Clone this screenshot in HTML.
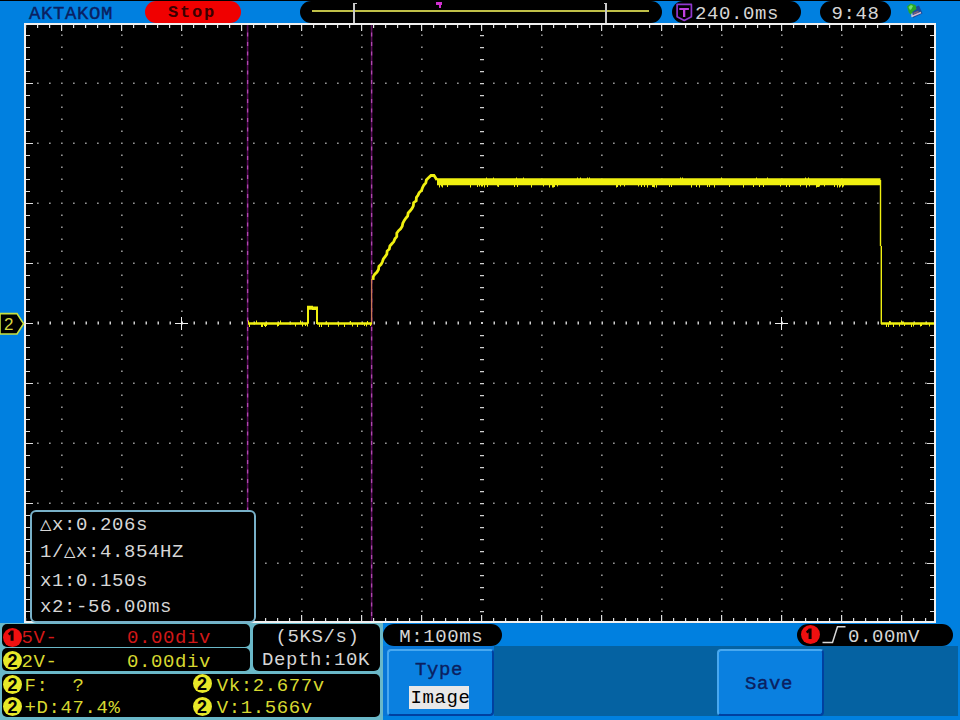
<!DOCTYPE html>
<html><head><meta charset="utf-8"><style>
*{margin:0;padding:0;box-sizing:border-box}
html,body{width:960px;height:720px;overflow:hidden;background:#0080e0;font-family:"Liberation Mono",monospace}
.a{position:absolute;white-space:pre;line-height:1}
.pill{position:absolute;background:#000;border-radius:11px}
.t{position:absolute;white-space:pre;line-height:1;font-size:19px;letter-spacing:0.6px}
.circ{position:absolute;width:19px;height:19px;border-radius:50%;font-family:"Liberation Sans",sans-serif;font-weight:bold;font-size:18px;line-height:20px;text-align:center;color:#000}
</style></head><body>
<div class="a" style="left:0;top:0;width:960px;height:1px;background:#000"></div>
<div class="t" style="left:29px;top:4.7px;color:#0a2060;-webkit-text-stroke:0.4px #0a2060">AKTAKOM</div>
<div class="pill" style="left:145px;top:1px;width:96px;height:22px;background:#f00000"></div>
<div class="t" style="left:168px;top:4.3px;color:#3a0000;font-size:17px;letter-spacing:1.8px;font-weight:bold">Stop</div>
<div class="pill" style="left:300px;top:1px;width:362px;height:22px"></div>
<div class="a" style="left:312px;top:10px;width:337px;height:2px;background:#c0c048"></div>
<div class="a" style="left:353px;top:2.5px;width:2px;height:20.5px;background:#c8c8c8"></div><div class="a" style="left:353px;top:2.5px;width:3.5px;height:1.5px;background:#c8c8c8"></div>
<div class="a" style="left:605px;top:2.5px;width:2px;height:20.5px;background:#c8c8c8"></div><div class="a" style="left:603.5px;top:2.5px;width:3.5px;height:1.5px;background:#c8c8c8"></div>
<div class="a" style="left:436.3px;top:2.3px;width:6.2px;height:2.4px;background:#d030d0"></div>
<div class="a" style="left:438.8px;top:2.3px;width:2.2px;height:5.5px;background:#d030d0"></div>
<div class="pill" style="left:672px;top:1px;width:129px;height:22px"></div>
<svg class="a" style="left:0;top:0" width="700" height="24"><path d="M677.1 4.4h14.3v12.4l-7.15 3.6l-7.15-3.6z" fill="none" stroke="#9038cc" stroke-width="1.7" stroke-linejoin="round"/><path d="M679.3 8h9.6v2h-9.6zM683 8h2.3v9h-2.3z" fill="#c040e0"/></svg>
<div class="t" style="left:695px;top:4.7px;color:#d6d6d6">240.0ms</div>
<div class="pill" style="left:820px;top:1px;width:71px;height:22px"></div>
<div class="t" style="left:831.5px;top:4.5px;color:#d6d6d6">9:48</div>
<svg class="a" style="left:0;top:0" width="960" height="720" viewBox="0 0 960 720">
<path d="M910 9l9-3.5 3.5 8-9.5 4.5z" fill="#1a4a9a"/>
<path d="M911.5 16.5l9.5-4" stroke="#d8b8c8" stroke-width="1.6" fill="none"/>
<path d="M911 11l1.5 6" stroke="#b0c8e0" stroke-width="1.4" fill="none"/>
<path d="M913.5 13.5l5-2" stroke="#806070" stroke-width="1.4" fill="none"/>
<path d="M907 6.5l3.5-3 5 1.5 1 4-3.5 2.5-2 3-2-1.5z" fill="#28a828"/>
<path d="M908.5 7l2.5-2 2 1-1.5 3-1.5 1z" fill="#70e070"/>
<rect x="24" y="23" width="912" height="600" fill="#f0f0f0"/>
<rect x="26" y="25" width="908" height="596" fill="#000"/>
<path d="M61 34.4h1.7v1.6h-1.7zM61 46.4h1.7v1.6h-1.7zM61 58.4h1.7v1.6h-1.7zM61 70.4h1.7v1.6h-1.7zM61 82.4h1.7v1.6h-1.7zM61 94.4h1.7v1.6h-1.7zM61 106.4h1.7v1.6h-1.7zM61 118.4h1.7v1.6h-1.7zM61 130.4h1.7v1.6h-1.7zM61 142.4h1.7v1.6h-1.7zM61 154.4h1.7v1.6h-1.7zM61 166.4h1.7v1.6h-1.7zM61 178.4h1.7v1.6h-1.7zM61 190.4h1.7v1.6h-1.7zM61 202.4h1.7v1.6h-1.7zM61 214.4h1.7v1.6h-1.7zM61 226.4h1.7v1.6h-1.7zM61 238.4h1.7v1.6h-1.7zM61 250.4h1.7v1.6h-1.7zM61 262.4h1.7v1.6h-1.7zM61 274.4h1.7v1.6h-1.7zM61 286.4h1.7v1.6h-1.7zM61 298.4h1.7v1.6h-1.7zM61 310.4h1.7v1.6h-1.7zM61 334.4h1.7v1.6h-1.7zM61 346.4h1.7v1.6h-1.7zM61 358.4h1.7v1.6h-1.7zM61 370.4h1.7v1.6h-1.7zM61 382.4h1.7v1.6h-1.7zM61 394.4h1.7v1.6h-1.7zM61 406.4h1.7v1.6h-1.7zM61 418.4h1.7v1.6h-1.7zM61 430.4h1.7v1.6h-1.7zM61 442.4h1.7v1.6h-1.7zM61 454.4h1.7v1.6h-1.7zM61 466.4h1.7v1.6h-1.7zM61 478.4h1.7v1.6h-1.7zM61 490.4h1.7v1.6h-1.7zM61 502.4h1.7v1.6h-1.7zM61 514.4h1.7v1.6h-1.7zM61 526.4h1.7v1.6h-1.7zM61 538.4h1.7v1.6h-1.7zM61 550.4h1.7v1.6h-1.7zM61 562.4h1.7v1.6h-1.7zM61 574.4h1.7v1.6h-1.7zM61 586.4h1.7v1.6h-1.7zM61 598.4h1.7v1.6h-1.7zM61 610.4h1.7v1.6h-1.7zM121 34.4h1.7v1.6h-1.7zM121 46.4h1.7v1.6h-1.7zM121 58.4h1.7v1.6h-1.7zM121 70.4h1.7v1.6h-1.7zM121 82.4h1.7v1.6h-1.7zM121 94.4h1.7v1.6h-1.7zM121 106.4h1.7v1.6h-1.7zM121 118.4h1.7v1.6h-1.7zM121 130.4h1.7v1.6h-1.7zM121 142.4h1.7v1.6h-1.7zM121 154.4h1.7v1.6h-1.7zM121 166.4h1.7v1.6h-1.7zM121 178.4h1.7v1.6h-1.7zM121 190.4h1.7v1.6h-1.7zM121 202.4h1.7v1.6h-1.7zM121 214.4h1.7v1.6h-1.7zM121 226.4h1.7v1.6h-1.7zM121 238.4h1.7v1.6h-1.7zM121 250.4h1.7v1.6h-1.7zM121 262.4h1.7v1.6h-1.7zM121 274.4h1.7v1.6h-1.7zM121 286.4h1.7v1.6h-1.7zM121 298.4h1.7v1.6h-1.7zM121 310.4h1.7v1.6h-1.7zM121 334.4h1.7v1.6h-1.7zM121 346.4h1.7v1.6h-1.7zM121 358.4h1.7v1.6h-1.7zM121 370.4h1.7v1.6h-1.7zM121 382.4h1.7v1.6h-1.7zM121 394.4h1.7v1.6h-1.7zM121 406.4h1.7v1.6h-1.7zM121 418.4h1.7v1.6h-1.7zM121 430.4h1.7v1.6h-1.7zM121 442.4h1.7v1.6h-1.7zM121 454.4h1.7v1.6h-1.7zM121 466.4h1.7v1.6h-1.7zM121 478.4h1.7v1.6h-1.7zM121 490.4h1.7v1.6h-1.7zM121 502.4h1.7v1.6h-1.7zM121 514.4h1.7v1.6h-1.7zM121 526.4h1.7v1.6h-1.7zM121 538.4h1.7v1.6h-1.7zM121 550.4h1.7v1.6h-1.7zM121 562.4h1.7v1.6h-1.7zM121 574.4h1.7v1.6h-1.7zM121 586.4h1.7v1.6h-1.7zM121 598.4h1.7v1.6h-1.7zM121 610.4h1.7v1.6h-1.7zM181 34.4h1.7v1.6h-1.7zM181 46.4h1.7v1.6h-1.7zM181 58.4h1.7v1.6h-1.7zM181 70.4h1.7v1.6h-1.7zM181 82.4h1.7v1.6h-1.7zM181 94.4h1.7v1.6h-1.7zM181 106.4h1.7v1.6h-1.7zM181 118.4h1.7v1.6h-1.7zM181 130.4h1.7v1.6h-1.7zM181 142.4h1.7v1.6h-1.7zM181 154.4h1.7v1.6h-1.7zM181 166.4h1.7v1.6h-1.7zM181 178.4h1.7v1.6h-1.7zM181 190.4h1.7v1.6h-1.7zM181 202.4h1.7v1.6h-1.7zM181 214.4h1.7v1.6h-1.7zM181 226.4h1.7v1.6h-1.7zM181 238.4h1.7v1.6h-1.7zM181 250.4h1.7v1.6h-1.7zM181 262.4h1.7v1.6h-1.7zM181 274.4h1.7v1.6h-1.7zM181 286.4h1.7v1.6h-1.7zM181 298.4h1.7v1.6h-1.7zM181 310.4h1.7v1.6h-1.7zM181 334.4h1.7v1.6h-1.7zM181 346.4h1.7v1.6h-1.7zM181 358.4h1.7v1.6h-1.7zM181 370.4h1.7v1.6h-1.7zM181 382.4h1.7v1.6h-1.7zM181 394.4h1.7v1.6h-1.7zM181 406.4h1.7v1.6h-1.7zM181 418.4h1.7v1.6h-1.7zM181 430.4h1.7v1.6h-1.7zM181 442.4h1.7v1.6h-1.7zM181 454.4h1.7v1.6h-1.7zM181 466.4h1.7v1.6h-1.7zM181 478.4h1.7v1.6h-1.7zM181 490.4h1.7v1.6h-1.7zM181 502.4h1.7v1.6h-1.7zM181 514.4h1.7v1.6h-1.7zM181 526.4h1.7v1.6h-1.7zM181 538.4h1.7v1.6h-1.7zM181 550.4h1.7v1.6h-1.7zM181 562.4h1.7v1.6h-1.7zM181 574.4h1.7v1.6h-1.7zM181 586.4h1.7v1.6h-1.7zM181 598.4h1.7v1.6h-1.7zM181 610.4h1.7v1.6h-1.7zM241 34.4h1.7v1.6h-1.7zM241 46.4h1.7v1.6h-1.7zM241 58.4h1.7v1.6h-1.7zM241 70.4h1.7v1.6h-1.7zM241 82.4h1.7v1.6h-1.7zM241 94.4h1.7v1.6h-1.7zM241 106.4h1.7v1.6h-1.7zM241 118.4h1.7v1.6h-1.7zM241 130.4h1.7v1.6h-1.7zM241 142.4h1.7v1.6h-1.7zM241 154.4h1.7v1.6h-1.7zM241 166.4h1.7v1.6h-1.7zM241 178.4h1.7v1.6h-1.7zM241 190.4h1.7v1.6h-1.7zM241 202.4h1.7v1.6h-1.7zM241 214.4h1.7v1.6h-1.7zM241 226.4h1.7v1.6h-1.7zM241 238.4h1.7v1.6h-1.7zM241 250.4h1.7v1.6h-1.7zM241 262.4h1.7v1.6h-1.7zM241 274.4h1.7v1.6h-1.7zM241 286.4h1.7v1.6h-1.7zM241 298.4h1.7v1.6h-1.7zM241 310.4h1.7v1.6h-1.7zM241 334.4h1.7v1.6h-1.7zM241 346.4h1.7v1.6h-1.7zM241 358.4h1.7v1.6h-1.7zM241 370.4h1.7v1.6h-1.7zM241 382.4h1.7v1.6h-1.7zM241 394.4h1.7v1.6h-1.7zM241 406.4h1.7v1.6h-1.7zM241 418.4h1.7v1.6h-1.7zM241 430.4h1.7v1.6h-1.7zM241 442.4h1.7v1.6h-1.7zM241 454.4h1.7v1.6h-1.7zM241 466.4h1.7v1.6h-1.7zM241 478.4h1.7v1.6h-1.7zM241 490.4h1.7v1.6h-1.7zM241 502.4h1.7v1.6h-1.7zM241 514.4h1.7v1.6h-1.7zM241 526.4h1.7v1.6h-1.7zM241 538.4h1.7v1.6h-1.7zM241 550.4h1.7v1.6h-1.7zM241 562.4h1.7v1.6h-1.7zM241 574.4h1.7v1.6h-1.7zM241 586.4h1.7v1.6h-1.7zM241 598.4h1.7v1.6h-1.7zM241 610.4h1.7v1.6h-1.7zM301 34.4h1.7v1.6h-1.7zM301 46.4h1.7v1.6h-1.7zM301 58.4h1.7v1.6h-1.7zM301 70.4h1.7v1.6h-1.7zM301 82.4h1.7v1.6h-1.7zM301 94.4h1.7v1.6h-1.7zM301 106.4h1.7v1.6h-1.7zM301 118.4h1.7v1.6h-1.7zM301 130.4h1.7v1.6h-1.7zM301 142.4h1.7v1.6h-1.7zM301 154.4h1.7v1.6h-1.7zM301 166.4h1.7v1.6h-1.7zM301 178.4h1.7v1.6h-1.7zM301 190.4h1.7v1.6h-1.7zM301 202.4h1.7v1.6h-1.7zM301 214.4h1.7v1.6h-1.7zM301 226.4h1.7v1.6h-1.7zM301 238.4h1.7v1.6h-1.7zM301 250.4h1.7v1.6h-1.7zM301 262.4h1.7v1.6h-1.7zM301 274.4h1.7v1.6h-1.7zM301 286.4h1.7v1.6h-1.7zM301 298.4h1.7v1.6h-1.7zM301 310.4h1.7v1.6h-1.7zM301 334.4h1.7v1.6h-1.7zM301 346.4h1.7v1.6h-1.7zM301 358.4h1.7v1.6h-1.7zM301 370.4h1.7v1.6h-1.7zM301 382.4h1.7v1.6h-1.7zM301 394.4h1.7v1.6h-1.7zM301 406.4h1.7v1.6h-1.7zM301 418.4h1.7v1.6h-1.7zM301 430.4h1.7v1.6h-1.7zM301 442.4h1.7v1.6h-1.7zM301 454.4h1.7v1.6h-1.7zM301 466.4h1.7v1.6h-1.7zM301 478.4h1.7v1.6h-1.7zM301 490.4h1.7v1.6h-1.7zM301 502.4h1.7v1.6h-1.7zM301 514.4h1.7v1.6h-1.7zM301 526.4h1.7v1.6h-1.7zM301 538.4h1.7v1.6h-1.7zM301 550.4h1.7v1.6h-1.7zM301 562.4h1.7v1.6h-1.7zM301 574.4h1.7v1.6h-1.7zM301 586.4h1.7v1.6h-1.7zM301 598.4h1.7v1.6h-1.7zM301 610.4h1.7v1.6h-1.7zM361 34.4h1.7v1.6h-1.7zM361 46.4h1.7v1.6h-1.7zM361 58.4h1.7v1.6h-1.7zM361 70.4h1.7v1.6h-1.7zM361 82.4h1.7v1.6h-1.7zM361 94.4h1.7v1.6h-1.7zM361 106.4h1.7v1.6h-1.7zM361 118.4h1.7v1.6h-1.7zM361 130.4h1.7v1.6h-1.7zM361 142.4h1.7v1.6h-1.7zM361 154.4h1.7v1.6h-1.7zM361 166.4h1.7v1.6h-1.7zM361 178.4h1.7v1.6h-1.7zM361 190.4h1.7v1.6h-1.7zM361 202.4h1.7v1.6h-1.7zM361 214.4h1.7v1.6h-1.7zM361 226.4h1.7v1.6h-1.7zM361 238.4h1.7v1.6h-1.7zM361 250.4h1.7v1.6h-1.7zM361 262.4h1.7v1.6h-1.7zM361 274.4h1.7v1.6h-1.7zM361 286.4h1.7v1.6h-1.7zM361 298.4h1.7v1.6h-1.7zM361 310.4h1.7v1.6h-1.7zM361 334.4h1.7v1.6h-1.7zM361 346.4h1.7v1.6h-1.7zM361 358.4h1.7v1.6h-1.7zM361 370.4h1.7v1.6h-1.7zM361 382.4h1.7v1.6h-1.7zM361 394.4h1.7v1.6h-1.7zM361 406.4h1.7v1.6h-1.7zM361 418.4h1.7v1.6h-1.7zM361 430.4h1.7v1.6h-1.7zM361 442.4h1.7v1.6h-1.7zM361 454.4h1.7v1.6h-1.7zM361 466.4h1.7v1.6h-1.7zM361 478.4h1.7v1.6h-1.7zM361 490.4h1.7v1.6h-1.7zM361 502.4h1.7v1.6h-1.7zM361 514.4h1.7v1.6h-1.7zM361 526.4h1.7v1.6h-1.7zM361 538.4h1.7v1.6h-1.7zM361 550.4h1.7v1.6h-1.7zM361 562.4h1.7v1.6h-1.7zM361 574.4h1.7v1.6h-1.7zM361 586.4h1.7v1.6h-1.7zM361 598.4h1.7v1.6h-1.7zM361 610.4h1.7v1.6h-1.7zM421 34.4h1.7v1.6h-1.7zM421 46.4h1.7v1.6h-1.7zM421 58.4h1.7v1.6h-1.7zM421 70.4h1.7v1.6h-1.7zM421 82.4h1.7v1.6h-1.7zM421 94.4h1.7v1.6h-1.7zM421 106.4h1.7v1.6h-1.7zM421 118.4h1.7v1.6h-1.7zM421 130.4h1.7v1.6h-1.7zM421 142.4h1.7v1.6h-1.7zM421 154.4h1.7v1.6h-1.7zM421 166.4h1.7v1.6h-1.7zM421 178.4h1.7v1.6h-1.7zM421 190.4h1.7v1.6h-1.7zM421 202.4h1.7v1.6h-1.7zM421 214.4h1.7v1.6h-1.7zM421 226.4h1.7v1.6h-1.7zM421 238.4h1.7v1.6h-1.7zM421 250.4h1.7v1.6h-1.7zM421 262.4h1.7v1.6h-1.7zM421 274.4h1.7v1.6h-1.7zM421 286.4h1.7v1.6h-1.7zM421 298.4h1.7v1.6h-1.7zM421 310.4h1.7v1.6h-1.7zM421 334.4h1.7v1.6h-1.7zM421 346.4h1.7v1.6h-1.7zM421 358.4h1.7v1.6h-1.7zM421 370.4h1.7v1.6h-1.7zM421 382.4h1.7v1.6h-1.7zM421 394.4h1.7v1.6h-1.7zM421 406.4h1.7v1.6h-1.7zM421 418.4h1.7v1.6h-1.7zM421 430.4h1.7v1.6h-1.7zM421 442.4h1.7v1.6h-1.7zM421 454.4h1.7v1.6h-1.7zM421 466.4h1.7v1.6h-1.7zM421 478.4h1.7v1.6h-1.7zM421 490.4h1.7v1.6h-1.7zM421 502.4h1.7v1.6h-1.7zM421 514.4h1.7v1.6h-1.7zM421 526.4h1.7v1.6h-1.7zM421 538.4h1.7v1.6h-1.7zM421 550.4h1.7v1.6h-1.7zM421 562.4h1.7v1.6h-1.7zM421 574.4h1.7v1.6h-1.7zM421 586.4h1.7v1.6h-1.7zM421 598.4h1.7v1.6h-1.7zM421 610.4h1.7v1.6h-1.7zM541 34.4h1.7v1.6h-1.7zM541 46.4h1.7v1.6h-1.7zM541 58.4h1.7v1.6h-1.7zM541 70.4h1.7v1.6h-1.7zM541 82.4h1.7v1.6h-1.7zM541 94.4h1.7v1.6h-1.7zM541 106.4h1.7v1.6h-1.7zM541 118.4h1.7v1.6h-1.7zM541 130.4h1.7v1.6h-1.7zM541 142.4h1.7v1.6h-1.7zM541 154.4h1.7v1.6h-1.7zM541 166.4h1.7v1.6h-1.7zM541 178.4h1.7v1.6h-1.7zM541 190.4h1.7v1.6h-1.7zM541 202.4h1.7v1.6h-1.7zM541 214.4h1.7v1.6h-1.7zM541 226.4h1.7v1.6h-1.7zM541 238.4h1.7v1.6h-1.7zM541 250.4h1.7v1.6h-1.7zM541 262.4h1.7v1.6h-1.7zM541 274.4h1.7v1.6h-1.7zM541 286.4h1.7v1.6h-1.7zM541 298.4h1.7v1.6h-1.7zM541 310.4h1.7v1.6h-1.7zM541 334.4h1.7v1.6h-1.7zM541 346.4h1.7v1.6h-1.7zM541 358.4h1.7v1.6h-1.7zM541 370.4h1.7v1.6h-1.7zM541 382.4h1.7v1.6h-1.7zM541 394.4h1.7v1.6h-1.7zM541 406.4h1.7v1.6h-1.7zM541 418.4h1.7v1.6h-1.7zM541 430.4h1.7v1.6h-1.7zM541 442.4h1.7v1.6h-1.7zM541 454.4h1.7v1.6h-1.7zM541 466.4h1.7v1.6h-1.7zM541 478.4h1.7v1.6h-1.7zM541 490.4h1.7v1.6h-1.7zM541 502.4h1.7v1.6h-1.7zM541 514.4h1.7v1.6h-1.7zM541 526.4h1.7v1.6h-1.7zM541 538.4h1.7v1.6h-1.7zM541 550.4h1.7v1.6h-1.7zM541 562.4h1.7v1.6h-1.7zM541 574.4h1.7v1.6h-1.7zM541 586.4h1.7v1.6h-1.7zM541 598.4h1.7v1.6h-1.7zM541 610.4h1.7v1.6h-1.7zM601 34.4h1.7v1.6h-1.7zM601 46.4h1.7v1.6h-1.7zM601 58.4h1.7v1.6h-1.7zM601 70.4h1.7v1.6h-1.7zM601 82.4h1.7v1.6h-1.7zM601 94.4h1.7v1.6h-1.7zM601 106.4h1.7v1.6h-1.7zM601 118.4h1.7v1.6h-1.7zM601 130.4h1.7v1.6h-1.7zM601 142.4h1.7v1.6h-1.7zM601 154.4h1.7v1.6h-1.7zM601 166.4h1.7v1.6h-1.7zM601 178.4h1.7v1.6h-1.7zM601 190.4h1.7v1.6h-1.7zM601 202.4h1.7v1.6h-1.7zM601 214.4h1.7v1.6h-1.7zM601 226.4h1.7v1.6h-1.7zM601 238.4h1.7v1.6h-1.7zM601 250.4h1.7v1.6h-1.7zM601 262.4h1.7v1.6h-1.7zM601 274.4h1.7v1.6h-1.7zM601 286.4h1.7v1.6h-1.7zM601 298.4h1.7v1.6h-1.7zM601 310.4h1.7v1.6h-1.7zM601 334.4h1.7v1.6h-1.7zM601 346.4h1.7v1.6h-1.7zM601 358.4h1.7v1.6h-1.7zM601 370.4h1.7v1.6h-1.7zM601 382.4h1.7v1.6h-1.7zM601 394.4h1.7v1.6h-1.7zM601 406.4h1.7v1.6h-1.7zM601 418.4h1.7v1.6h-1.7zM601 430.4h1.7v1.6h-1.7zM601 442.4h1.7v1.6h-1.7zM601 454.4h1.7v1.6h-1.7zM601 466.4h1.7v1.6h-1.7zM601 478.4h1.7v1.6h-1.7zM601 490.4h1.7v1.6h-1.7zM601 502.4h1.7v1.6h-1.7zM601 514.4h1.7v1.6h-1.7zM601 526.4h1.7v1.6h-1.7zM601 538.4h1.7v1.6h-1.7zM601 550.4h1.7v1.6h-1.7zM601 562.4h1.7v1.6h-1.7zM601 574.4h1.7v1.6h-1.7zM601 586.4h1.7v1.6h-1.7zM601 598.4h1.7v1.6h-1.7zM601 610.4h1.7v1.6h-1.7zM661 34.4h1.7v1.6h-1.7zM661 46.4h1.7v1.6h-1.7zM661 58.4h1.7v1.6h-1.7zM661 70.4h1.7v1.6h-1.7zM661 82.4h1.7v1.6h-1.7zM661 94.4h1.7v1.6h-1.7zM661 106.4h1.7v1.6h-1.7zM661 118.4h1.7v1.6h-1.7zM661 130.4h1.7v1.6h-1.7zM661 142.4h1.7v1.6h-1.7zM661 154.4h1.7v1.6h-1.7zM661 166.4h1.7v1.6h-1.7zM661 178.4h1.7v1.6h-1.7zM661 190.4h1.7v1.6h-1.7zM661 202.4h1.7v1.6h-1.7zM661 214.4h1.7v1.6h-1.7zM661 226.4h1.7v1.6h-1.7zM661 238.4h1.7v1.6h-1.7zM661 250.4h1.7v1.6h-1.7zM661 262.4h1.7v1.6h-1.7zM661 274.4h1.7v1.6h-1.7zM661 286.4h1.7v1.6h-1.7zM661 298.4h1.7v1.6h-1.7zM661 310.4h1.7v1.6h-1.7zM661 334.4h1.7v1.6h-1.7zM661 346.4h1.7v1.6h-1.7zM661 358.4h1.7v1.6h-1.7zM661 370.4h1.7v1.6h-1.7zM661 382.4h1.7v1.6h-1.7zM661 394.4h1.7v1.6h-1.7zM661 406.4h1.7v1.6h-1.7zM661 418.4h1.7v1.6h-1.7zM661 430.4h1.7v1.6h-1.7zM661 442.4h1.7v1.6h-1.7zM661 454.4h1.7v1.6h-1.7zM661 466.4h1.7v1.6h-1.7zM661 478.4h1.7v1.6h-1.7zM661 490.4h1.7v1.6h-1.7zM661 502.4h1.7v1.6h-1.7zM661 514.4h1.7v1.6h-1.7zM661 526.4h1.7v1.6h-1.7zM661 538.4h1.7v1.6h-1.7zM661 550.4h1.7v1.6h-1.7zM661 562.4h1.7v1.6h-1.7zM661 574.4h1.7v1.6h-1.7zM661 586.4h1.7v1.6h-1.7zM661 598.4h1.7v1.6h-1.7zM661 610.4h1.7v1.6h-1.7zM721 34.4h1.7v1.6h-1.7zM721 46.4h1.7v1.6h-1.7zM721 58.4h1.7v1.6h-1.7zM721 70.4h1.7v1.6h-1.7zM721 82.4h1.7v1.6h-1.7zM721 94.4h1.7v1.6h-1.7zM721 106.4h1.7v1.6h-1.7zM721 118.4h1.7v1.6h-1.7zM721 130.4h1.7v1.6h-1.7zM721 142.4h1.7v1.6h-1.7zM721 154.4h1.7v1.6h-1.7zM721 166.4h1.7v1.6h-1.7zM721 178.4h1.7v1.6h-1.7zM721 190.4h1.7v1.6h-1.7zM721 202.4h1.7v1.6h-1.7zM721 214.4h1.7v1.6h-1.7zM721 226.4h1.7v1.6h-1.7zM721 238.4h1.7v1.6h-1.7zM721 250.4h1.7v1.6h-1.7zM721 262.4h1.7v1.6h-1.7zM721 274.4h1.7v1.6h-1.7zM721 286.4h1.7v1.6h-1.7zM721 298.4h1.7v1.6h-1.7zM721 310.4h1.7v1.6h-1.7zM721 334.4h1.7v1.6h-1.7zM721 346.4h1.7v1.6h-1.7zM721 358.4h1.7v1.6h-1.7zM721 370.4h1.7v1.6h-1.7zM721 382.4h1.7v1.6h-1.7zM721 394.4h1.7v1.6h-1.7zM721 406.4h1.7v1.6h-1.7zM721 418.4h1.7v1.6h-1.7zM721 430.4h1.7v1.6h-1.7zM721 442.4h1.7v1.6h-1.7zM721 454.4h1.7v1.6h-1.7zM721 466.4h1.7v1.6h-1.7zM721 478.4h1.7v1.6h-1.7zM721 490.4h1.7v1.6h-1.7zM721 502.4h1.7v1.6h-1.7zM721 514.4h1.7v1.6h-1.7zM721 526.4h1.7v1.6h-1.7zM721 538.4h1.7v1.6h-1.7zM721 550.4h1.7v1.6h-1.7zM721 562.4h1.7v1.6h-1.7zM721 574.4h1.7v1.6h-1.7zM721 586.4h1.7v1.6h-1.7zM721 598.4h1.7v1.6h-1.7zM721 610.4h1.7v1.6h-1.7zM781 34.4h1.7v1.6h-1.7zM781 46.4h1.7v1.6h-1.7zM781 58.4h1.7v1.6h-1.7zM781 70.4h1.7v1.6h-1.7zM781 82.4h1.7v1.6h-1.7zM781 94.4h1.7v1.6h-1.7zM781 106.4h1.7v1.6h-1.7zM781 118.4h1.7v1.6h-1.7zM781 130.4h1.7v1.6h-1.7zM781 142.4h1.7v1.6h-1.7zM781 154.4h1.7v1.6h-1.7zM781 166.4h1.7v1.6h-1.7zM781 178.4h1.7v1.6h-1.7zM781 190.4h1.7v1.6h-1.7zM781 202.4h1.7v1.6h-1.7zM781 214.4h1.7v1.6h-1.7zM781 226.4h1.7v1.6h-1.7zM781 238.4h1.7v1.6h-1.7zM781 250.4h1.7v1.6h-1.7zM781 262.4h1.7v1.6h-1.7zM781 274.4h1.7v1.6h-1.7zM781 286.4h1.7v1.6h-1.7zM781 298.4h1.7v1.6h-1.7zM781 310.4h1.7v1.6h-1.7zM781 334.4h1.7v1.6h-1.7zM781 346.4h1.7v1.6h-1.7zM781 358.4h1.7v1.6h-1.7zM781 370.4h1.7v1.6h-1.7zM781 382.4h1.7v1.6h-1.7zM781 394.4h1.7v1.6h-1.7zM781 406.4h1.7v1.6h-1.7zM781 418.4h1.7v1.6h-1.7zM781 430.4h1.7v1.6h-1.7zM781 442.4h1.7v1.6h-1.7zM781 454.4h1.7v1.6h-1.7zM781 466.4h1.7v1.6h-1.7zM781 478.4h1.7v1.6h-1.7zM781 490.4h1.7v1.6h-1.7zM781 502.4h1.7v1.6h-1.7zM781 514.4h1.7v1.6h-1.7zM781 526.4h1.7v1.6h-1.7zM781 538.4h1.7v1.6h-1.7zM781 550.4h1.7v1.6h-1.7zM781 562.4h1.7v1.6h-1.7zM781 574.4h1.7v1.6h-1.7zM781 586.4h1.7v1.6h-1.7zM781 598.4h1.7v1.6h-1.7zM781 610.4h1.7v1.6h-1.7zM841 34.4h1.7v1.6h-1.7zM841 46.4h1.7v1.6h-1.7zM841 58.4h1.7v1.6h-1.7zM841 70.4h1.7v1.6h-1.7zM841 82.4h1.7v1.6h-1.7zM841 94.4h1.7v1.6h-1.7zM841 106.4h1.7v1.6h-1.7zM841 118.4h1.7v1.6h-1.7zM841 130.4h1.7v1.6h-1.7zM841 142.4h1.7v1.6h-1.7zM841 154.4h1.7v1.6h-1.7zM841 166.4h1.7v1.6h-1.7zM841 178.4h1.7v1.6h-1.7zM841 190.4h1.7v1.6h-1.7zM841 202.4h1.7v1.6h-1.7zM841 214.4h1.7v1.6h-1.7zM841 226.4h1.7v1.6h-1.7zM841 238.4h1.7v1.6h-1.7zM841 250.4h1.7v1.6h-1.7zM841 262.4h1.7v1.6h-1.7zM841 274.4h1.7v1.6h-1.7zM841 286.4h1.7v1.6h-1.7zM841 298.4h1.7v1.6h-1.7zM841 310.4h1.7v1.6h-1.7zM841 334.4h1.7v1.6h-1.7zM841 346.4h1.7v1.6h-1.7zM841 358.4h1.7v1.6h-1.7zM841 370.4h1.7v1.6h-1.7zM841 382.4h1.7v1.6h-1.7zM841 394.4h1.7v1.6h-1.7zM841 406.4h1.7v1.6h-1.7zM841 418.4h1.7v1.6h-1.7zM841 430.4h1.7v1.6h-1.7zM841 442.4h1.7v1.6h-1.7zM841 454.4h1.7v1.6h-1.7zM841 466.4h1.7v1.6h-1.7zM841 478.4h1.7v1.6h-1.7zM841 490.4h1.7v1.6h-1.7zM841 502.4h1.7v1.6h-1.7zM841 514.4h1.7v1.6h-1.7zM841 526.4h1.7v1.6h-1.7zM841 538.4h1.7v1.6h-1.7zM841 550.4h1.7v1.6h-1.7zM841 562.4h1.7v1.6h-1.7zM841 574.4h1.7v1.6h-1.7zM841 586.4h1.7v1.6h-1.7zM841 598.4h1.7v1.6h-1.7zM841 610.4h1.7v1.6h-1.7zM901 34.4h1.7v1.6h-1.7zM901 46.4h1.7v1.6h-1.7zM901 58.4h1.7v1.6h-1.7zM901 70.4h1.7v1.6h-1.7zM901 82.4h1.7v1.6h-1.7zM901 94.4h1.7v1.6h-1.7zM901 106.4h1.7v1.6h-1.7zM901 118.4h1.7v1.6h-1.7zM901 130.4h1.7v1.6h-1.7zM901 142.4h1.7v1.6h-1.7zM901 154.4h1.7v1.6h-1.7zM901 166.4h1.7v1.6h-1.7zM901 178.4h1.7v1.6h-1.7zM901 190.4h1.7v1.6h-1.7zM901 202.4h1.7v1.6h-1.7zM901 214.4h1.7v1.6h-1.7zM901 226.4h1.7v1.6h-1.7zM901 238.4h1.7v1.6h-1.7zM901 250.4h1.7v1.6h-1.7zM901 262.4h1.7v1.6h-1.7zM901 274.4h1.7v1.6h-1.7zM901 286.4h1.7v1.6h-1.7zM901 298.4h1.7v1.6h-1.7zM901 310.4h1.7v1.6h-1.7zM901 334.4h1.7v1.6h-1.7zM901 346.4h1.7v1.6h-1.7zM901 358.4h1.7v1.6h-1.7zM901 370.4h1.7v1.6h-1.7zM901 382.4h1.7v1.6h-1.7zM901 394.4h1.7v1.6h-1.7zM901 406.4h1.7v1.6h-1.7zM901 418.4h1.7v1.6h-1.7zM901 430.4h1.7v1.6h-1.7zM901 442.4h1.7v1.6h-1.7zM901 454.4h1.7v1.6h-1.7zM901 466.4h1.7v1.6h-1.7zM901 478.4h1.7v1.6h-1.7zM901 490.4h1.7v1.6h-1.7zM901 502.4h1.7v1.6h-1.7zM901 514.4h1.7v1.6h-1.7zM901 526.4h1.7v1.6h-1.7zM901 538.4h1.7v1.6h-1.7zM901 550.4h1.7v1.6h-1.7zM901 562.4h1.7v1.6h-1.7zM901 574.4h1.7v1.6h-1.7zM901 586.4h1.7v1.6h-1.7zM901 598.4h1.7v1.6h-1.7zM901 610.4h1.7v1.6h-1.7zM37 82.4h1.7v1.6h-1.7zM49 82.4h1.7v1.6h-1.7zM73 82.4h1.7v1.6h-1.7zM85 82.4h1.7v1.6h-1.7zM97 82.4h1.7v1.6h-1.7zM109 82.4h1.7v1.6h-1.7zM133 82.4h1.7v1.6h-1.7zM145 82.4h1.7v1.6h-1.7zM157 82.4h1.7v1.6h-1.7zM169 82.4h1.7v1.6h-1.7zM193 82.4h1.7v1.6h-1.7zM205 82.4h1.7v1.6h-1.7zM217 82.4h1.7v1.6h-1.7zM229 82.4h1.7v1.6h-1.7zM253 82.4h1.7v1.6h-1.7zM265 82.4h1.7v1.6h-1.7zM277 82.4h1.7v1.6h-1.7zM289 82.4h1.7v1.6h-1.7zM313 82.4h1.7v1.6h-1.7zM325 82.4h1.7v1.6h-1.7zM337 82.4h1.7v1.6h-1.7zM349 82.4h1.7v1.6h-1.7zM373 82.4h1.7v1.6h-1.7zM385 82.4h1.7v1.6h-1.7zM397 82.4h1.7v1.6h-1.7zM409 82.4h1.7v1.6h-1.7zM433 82.4h1.7v1.6h-1.7zM445 82.4h1.7v1.6h-1.7zM457 82.4h1.7v1.6h-1.7zM469 82.4h1.7v1.6h-1.7zM493 82.4h1.7v1.6h-1.7zM505 82.4h1.7v1.6h-1.7zM517 82.4h1.7v1.6h-1.7zM529 82.4h1.7v1.6h-1.7zM553 82.4h1.7v1.6h-1.7zM565 82.4h1.7v1.6h-1.7zM577 82.4h1.7v1.6h-1.7zM589 82.4h1.7v1.6h-1.7zM613 82.4h1.7v1.6h-1.7zM625 82.4h1.7v1.6h-1.7zM637 82.4h1.7v1.6h-1.7zM649 82.4h1.7v1.6h-1.7zM673 82.4h1.7v1.6h-1.7zM685 82.4h1.7v1.6h-1.7zM697 82.4h1.7v1.6h-1.7zM709 82.4h1.7v1.6h-1.7zM733 82.4h1.7v1.6h-1.7zM745 82.4h1.7v1.6h-1.7zM757 82.4h1.7v1.6h-1.7zM769 82.4h1.7v1.6h-1.7zM793 82.4h1.7v1.6h-1.7zM805 82.4h1.7v1.6h-1.7zM817 82.4h1.7v1.6h-1.7zM829 82.4h1.7v1.6h-1.7zM853 82.4h1.7v1.6h-1.7zM865 82.4h1.7v1.6h-1.7zM877 82.4h1.7v1.6h-1.7zM889 82.4h1.7v1.6h-1.7zM913 82.4h1.7v1.6h-1.7zM925 82.4h1.7v1.6h-1.7zM37 142.4h1.7v1.6h-1.7zM49 142.4h1.7v1.6h-1.7zM73 142.4h1.7v1.6h-1.7zM85 142.4h1.7v1.6h-1.7zM97 142.4h1.7v1.6h-1.7zM109 142.4h1.7v1.6h-1.7zM133 142.4h1.7v1.6h-1.7zM145 142.4h1.7v1.6h-1.7zM157 142.4h1.7v1.6h-1.7zM169 142.4h1.7v1.6h-1.7zM193 142.4h1.7v1.6h-1.7zM205 142.4h1.7v1.6h-1.7zM217 142.4h1.7v1.6h-1.7zM229 142.4h1.7v1.6h-1.7zM253 142.4h1.7v1.6h-1.7zM265 142.4h1.7v1.6h-1.7zM277 142.4h1.7v1.6h-1.7zM289 142.4h1.7v1.6h-1.7zM313 142.4h1.7v1.6h-1.7zM325 142.4h1.7v1.6h-1.7zM337 142.4h1.7v1.6h-1.7zM349 142.4h1.7v1.6h-1.7zM373 142.4h1.7v1.6h-1.7zM385 142.4h1.7v1.6h-1.7zM397 142.4h1.7v1.6h-1.7zM409 142.4h1.7v1.6h-1.7zM433 142.4h1.7v1.6h-1.7zM445 142.4h1.7v1.6h-1.7zM457 142.4h1.7v1.6h-1.7zM469 142.4h1.7v1.6h-1.7zM493 142.4h1.7v1.6h-1.7zM505 142.4h1.7v1.6h-1.7zM517 142.4h1.7v1.6h-1.7zM529 142.4h1.7v1.6h-1.7zM553 142.4h1.7v1.6h-1.7zM565 142.4h1.7v1.6h-1.7zM577 142.4h1.7v1.6h-1.7zM589 142.4h1.7v1.6h-1.7zM613 142.4h1.7v1.6h-1.7zM625 142.4h1.7v1.6h-1.7zM637 142.4h1.7v1.6h-1.7zM649 142.4h1.7v1.6h-1.7zM673 142.4h1.7v1.6h-1.7zM685 142.4h1.7v1.6h-1.7zM697 142.4h1.7v1.6h-1.7zM709 142.4h1.7v1.6h-1.7zM733 142.4h1.7v1.6h-1.7zM745 142.4h1.7v1.6h-1.7zM757 142.4h1.7v1.6h-1.7zM769 142.4h1.7v1.6h-1.7zM793 142.4h1.7v1.6h-1.7zM805 142.4h1.7v1.6h-1.7zM817 142.4h1.7v1.6h-1.7zM829 142.4h1.7v1.6h-1.7zM853 142.4h1.7v1.6h-1.7zM865 142.4h1.7v1.6h-1.7zM877 142.4h1.7v1.6h-1.7zM889 142.4h1.7v1.6h-1.7zM913 142.4h1.7v1.6h-1.7zM925 142.4h1.7v1.6h-1.7zM37 202.4h1.7v1.6h-1.7zM49 202.4h1.7v1.6h-1.7zM73 202.4h1.7v1.6h-1.7zM85 202.4h1.7v1.6h-1.7zM97 202.4h1.7v1.6h-1.7zM109 202.4h1.7v1.6h-1.7zM133 202.4h1.7v1.6h-1.7zM145 202.4h1.7v1.6h-1.7zM157 202.4h1.7v1.6h-1.7zM169 202.4h1.7v1.6h-1.7zM193 202.4h1.7v1.6h-1.7zM205 202.4h1.7v1.6h-1.7zM217 202.4h1.7v1.6h-1.7zM229 202.4h1.7v1.6h-1.7zM253 202.4h1.7v1.6h-1.7zM265 202.4h1.7v1.6h-1.7zM277 202.4h1.7v1.6h-1.7zM289 202.4h1.7v1.6h-1.7zM313 202.4h1.7v1.6h-1.7zM325 202.4h1.7v1.6h-1.7zM337 202.4h1.7v1.6h-1.7zM349 202.4h1.7v1.6h-1.7zM373 202.4h1.7v1.6h-1.7zM385 202.4h1.7v1.6h-1.7zM397 202.4h1.7v1.6h-1.7zM409 202.4h1.7v1.6h-1.7zM433 202.4h1.7v1.6h-1.7zM445 202.4h1.7v1.6h-1.7zM457 202.4h1.7v1.6h-1.7zM469 202.4h1.7v1.6h-1.7zM493 202.4h1.7v1.6h-1.7zM505 202.4h1.7v1.6h-1.7zM517 202.4h1.7v1.6h-1.7zM529 202.4h1.7v1.6h-1.7zM553 202.4h1.7v1.6h-1.7zM565 202.4h1.7v1.6h-1.7zM577 202.4h1.7v1.6h-1.7zM589 202.4h1.7v1.6h-1.7zM613 202.4h1.7v1.6h-1.7zM625 202.4h1.7v1.6h-1.7zM637 202.4h1.7v1.6h-1.7zM649 202.4h1.7v1.6h-1.7zM673 202.4h1.7v1.6h-1.7zM685 202.4h1.7v1.6h-1.7zM697 202.4h1.7v1.6h-1.7zM709 202.4h1.7v1.6h-1.7zM733 202.4h1.7v1.6h-1.7zM745 202.4h1.7v1.6h-1.7zM757 202.4h1.7v1.6h-1.7zM769 202.4h1.7v1.6h-1.7zM793 202.4h1.7v1.6h-1.7zM805 202.4h1.7v1.6h-1.7zM817 202.4h1.7v1.6h-1.7zM829 202.4h1.7v1.6h-1.7zM853 202.4h1.7v1.6h-1.7zM865 202.4h1.7v1.6h-1.7zM877 202.4h1.7v1.6h-1.7zM889 202.4h1.7v1.6h-1.7zM913 202.4h1.7v1.6h-1.7zM925 202.4h1.7v1.6h-1.7zM37 262.4h1.7v1.6h-1.7zM49 262.4h1.7v1.6h-1.7zM73 262.4h1.7v1.6h-1.7zM85 262.4h1.7v1.6h-1.7zM97 262.4h1.7v1.6h-1.7zM109 262.4h1.7v1.6h-1.7zM133 262.4h1.7v1.6h-1.7zM145 262.4h1.7v1.6h-1.7zM157 262.4h1.7v1.6h-1.7zM169 262.4h1.7v1.6h-1.7zM193 262.4h1.7v1.6h-1.7zM205 262.4h1.7v1.6h-1.7zM217 262.4h1.7v1.6h-1.7zM229 262.4h1.7v1.6h-1.7zM253 262.4h1.7v1.6h-1.7zM265 262.4h1.7v1.6h-1.7zM277 262.4h1.7v1.6h-1.7zM289 262.4h1.7v1.6h-1.7zM313 262.4h1.7v1.6h-1.7zM325 262.4h1.7v1.6h-1.7zM337 262.4h1.7v1.6h-1.7zM349 262.4h1.7v1.6h-1.7zM373 262.4h1.7v1.6h-1.7zM385 262.4h1.7v1.6h-1.7zM397 262.4h1.7v1.6h-1.7zM409 262.4h1.7v1.6h-1.7zM433 262.4h1.7v1.6h-1.7zM445 262.4h1.7v1.6h-1.7zM457 262.4h1.7v1.6h-1.7zM469 262.4h1.7v1.6h-1.7zM493 262.4h1.7v1.6h-1.7zM505 262.4h1.7v1.6h-1.7zM517 262.4h1.7v1.6h-1.7zM529 262.4h1.7v1.6h-1.7zM553 262.4h1.7v1.6h-1.7zM565 262.4h1.7v1.6h-1.7zM577 262.4h1.7v1.6h-1.7zM589 262.4h1.7v1.6h-1.7zM613 262.4h1.7v1.6h-1.7zM625 262.4h1.7v1.6h-1.7zM637 262.4h1.7v1.6h-1.7zM649 262.4h1.7v1.6h-1.7zM673 262.4h1.7v1.6h-1.7zM685 262.4h1.7v1.6h-1.7zM697 262.4h1.7v1.6h-1.7zM709 262.4h1.7v1.6h-1.7zM733 262.4h1.7v1.6h-1.7zM745 262.4h1.7v1.6h-1.7zM757 262.4h1.7v1.6h-1.7zM769 262.4h1.7v1.6h-1.7zM793 262.4h1.7v1.6h-1.7zM805 262.4h1.7v1.6h-1.7zM817 262.4h1.7v1.6h-1.7zM829 262.4h1.7v1.6h-1.7zM853 262.4h1.7v1.6h-1.7zM865 262.4h1.7v1.6h-1.7zM877 262.4h1.7v1.6h-1.7zM889 262.4h1.7v1.6h-1.7zM913 262.4h1.7v1.6h-1.7zM925 262.4h1.7v1.6h-1.7zM37 382.4h1.7v1.6h-1.7zM49 382.4h1.7v1.6h-1.7zM73 382.4h1.7v1.6h-1.7zM85 382.4h1.7v1.6h-1.7zM97 382.4h1.7v1.6h-1.7zM109 382.4h1.7v1.6h-1.7zM133 382.4h1.7v1.6h-1.7zM145 382.4h1.7v1.6h-1.7zM157 382.4h1.7v1.6h-1.7zM169 382.4h1.7v1.6h-1.7zM193 382.4h1.7v1.6h-1.7zM205 382.4h1.7v1.6h-1.7zM217 382.4h1.7v1.6h-1.7zM229 382.4h1.7v1.6h-1.7zM253 382.4h1.7v1.6h-1.7zM265 382.4h1.7v1.6h-1.7zM277 382.4h1.7v1.6h-1.7zM289 382.4h1.7v1.6h-1.7zM313 382.4h1.7v1.6h-1.7zM325 382.4h1.7v1.6h-1.7zM337 382.4h1.7v1.6h-1.7zM349 382.4h1.7v1.6h-1.7zM373 382.4h1.7v1.6h-1.7zM385 382.4h1.7v1.6h-1.7zM397 382.4h1.7v1.6h-1.7zM409 382.4h1.7v1.6h-1.7zM433 382.4h1.7v1.6h-1.7zM445 382.4h1.7v1.6h-1.7zM457 382.4h1.7v1.6h-1.7zM469 382.4h1.7v1.6h-1.7zM493 382.4h1.7v1.6h-1.7zM505 382.4h1.7v1.6h-1.7zM517 382.4h1.7v1.6h-1.7zM529 382.4h1.7v1.6h-1.7zM553 382.4h1.7v1.6h-1.7zM565 382.4h1.7v1.6h-1.7zM577 382.4h1.7v1.6h-1.7zM589 382.4h1.7v1.6h-1.7zM613 382.4h1.7v1.6h-1.7zM625 382.4h1.7v1.6h-1.7zM637 382.4h1.7v1.6h-1.7zM649 382.4h1.7v1.6h-1.7zM673 382.4h1.7v1.6h-1.7zM685 382.4h1.7v1.6h-1.7zM697 382.4h1.7v1.6h-1.7zM709 382.4h1.7v1.6h-1.7zM733 382.4h1.7v1.6h-1.7zM745 382.4h1.7v1.6h-1.7zM757 382.4h1.7v1.6h-1.7zM769 382.4h1.7v1.6h-1.7zM793 382.4h1.7v1.6h-1.7zM805 382.4h1.7v1.6h-1.7zM817 382.4h1.7v1.6h-1.7zM829 382.4h1.7v1.6h-1.7zM853 382.4h1.7v1.6h-1.7zM865 382.4h1.7v1.6h-1.7zM877 382.4h1.7v1.6h-1.7zM889 382.4h1.7v1.6h-1.7zM913 382.4h1.7v1.6h-1.7zM925 382.4h1.7v1.6h-1.7zM37 442.4h1.7v1.6h-1.7zM49 442.4h1.7v1.6h-1.7zM73 442.4h1.7v1.6h-1.7zM85 442.4h1.7v1.6h-1.7zM97 442.4h1.7v1.6h-1.7zM109 442.4h1.7v1.6h-1.7zM133 442.4h1.7v1.6h-1.7zM145 442.4h1.7v1.6h-1.7zM157 442.4h1.7v1.6h-1.7zM169 442.4h1.7v1.6h-1.7zM193 442.4h1.7v1.6h-1.7zM205 442.4h1.7v1.6h-1.7zM217 442.4h1.7v1.6h-1.7zM229 442.4h1.7v1.6h-1.7zM253 442.4h1.7v1.6h-1.7zM265 442.4h1.7v1.6h-1.7zM277 442.4h1.7v1.6h-1.7zM289 442.4h1.7v1.6h-1.7zM313 442.4h1.7v1.6h-1.7zM325 442.4h1.7v1.6h-1.7zM337 442.4h1.7v1.6h-1.7zM349 442.4h1.7v1.6h-1.7zM373 442.4h1.7v1.6h-1.7zM385 442.4h1.7v1.6h-1.7zM397 442.4h1.7v1.6h-1.7zM409 442.4h1.7v1.6h-1.7zM433 442.4h1.7v1.6h-1.7zM445 442.4h1.7v1.6h-1.7zM457 442.4h1.7v1.6h-1.7zM469 442.4h1.7v1.6h-1.7zM493 442.4h1.7v1.6h-1.7zM505 442.4h1.7v1.6h-1.7zM517 442.4h1.7v1.6h-1.7zM529 442.4h1.7v1.6h-1.7zM553 442.4h1.7v1.6h-1.7zM565 442.4h1.7v1.6h-1.7zM577 442.4h1.7v1.6h-1.7zM589 442.4h1.7v1.6h-1.7zM613 442.4h1.7v1.6h-1.7zM625 442.4h1.7v1.6h-1.7zM637 442.4h1.7v1.6h-1.7zM649 442.4h1.7v1.6h-1.7zM673 442.4h1.7v1.6h-1.7zM685 442.4h1.7v1.6h-1.7zM697 442.4h1.7v1.6h-1.7zM709 442.4h1.7v1.6h-1.7zM733 442.4h1.7v1.6h-1.7zM745 442.4h1.7v1.6h-1.7zM757 442.4h1.7v1.6h-1.7zM769 442.4h1.7v1.6h-1.7zM793 442.4h1.7v1.6h-1.7zM805 442.4h1.7v1.6h-1.7zM817 442.4h1.7v1.6h-1.7zM829 442.4h1.7v1.6h-1.7zM853 442.4h1.7v1.6h-1.7zM865 442.4h1.7v1.6h-1.7zM877 442.4h1.7v1.6h-1.7zM889 442.4h1.7v1.6h-1.7zM913 442.4h1.7v1.6h-1.7zM925 442.4h1.7v1.6h-1.7zM37 502.4h1.7v1.6h-1.7zM49 502.4h1.7v1.6h-1.7zM73 502.4h1.7v1.6h-1.7zM85 502.4h1.7v1.6h-1.7zM97 502.4h1.7v1.6h-1.7zM109 502.4h1.7v1.6h-1.7zM133 502.4h1.7v1.6h-1.7zM145 502.4h1.7v1.6h-1.7zM157 502.4h1.7v1.6h-1.7zM169 502.4h1.7v1.6h-1.7zM193 502.4h1.7v1.6h-1.7zM205 502.4h1.7v1.6h-1.7zM217 502.4h1.7v1.6h-1.7zM229 502.4h1.7v1.6h-1.7zM253 502.4h1.7v1.6h-1.7zM265 502.4h1.7v1.6h-1.7zM277 502.4h1.7v1.6h-1.7zM289 502.4h1.7v1.6h-1.7zM313 502.4h1.7v1.6h-1.7zM325 502.4h1.7v1.6h-1.7zM337 502.4h1.7v1.6h-1.7zM349 502.4h1.7v1.6h-1.7zM373 502.4h1.7v1.6h-1.7zM385 502.4h1.7v1.6h-1.7zM397 502.4h1.7v1.6h-1.7zM409 502.4h1.7v1.6h-1.7zM433 502.4h1.7v1.6h-1.7zM445 502.4h1.7v1.6h-1.7zM457 502.4h1.7v1.6h-1.7zM469 502.4h1.7v1.6h-1.7zM493 502.4h1.7v1.6h-1.7zM505 502.4h1.7v1.6h-1.7zM517 502.4h1.7v1.6h-1.7zM529 502.4h1.7v1.6h-1.7zM553 502.4h1.7v1.6h-1.7zM565 502.4h1.7v1.6h-1.7zM577 502.4h1.7v1.6h-1.7zM589 502.4h1.7v1.6h-1.7zM613 502.4h1.7v1.6h-1.7zM625 502.4h1.7v1.6h-1.7zM637 502.4h1.7v1.6h-1.7zM649 502.4h1.7v1.6h-1.7zM673 502.4h1.7v1.6h-1.7zM685 502.4h1.7v1.6h-1.7zM697 502.4h1.7v1.6h-1.7zM709 502.4h1.7v1.6h-1.7zM733 502.4h1.7v1.6h-1.7zM745 502.4h1.7v1.6h-1.7zM757 502.4h1.7v1.6h-1.7zM769 502.4h1.7v1.6h-1.7zM793 502.4h1.7v1.6h-1.7zM805 502.4h1.7v1.6h-1.7zM817 502.4h1.7v1.6h-1.7zM829 502.4h1.7v1.6h-1.7zM853 502.4h1.7v1.6h-1.7zM865 502.4h1.7v1.6h-1.7zM877 502.4h1.7v1.6h-1.7zM889 502.4h1.7v1.6h-1.7zM913 502.4h1.7v1.6h-1.7zM925 502.4h1.7v1.6h-1.7zM37 562.4h1.7v1.6h-1.7zM49 562.4h1.7v1.6h-1.7zM73 562.4h1.7v1.6h-1.7zM85 562.4h1.7v1.6h-1.7zM97 562.4h1.7v1.6h-1.7zM109 562.4h1.7v1.6h-1.7zM133 562.4h1.7v1.6h-1.7zM145 562.4h1.7v1.6h-1.7zM157 562.4h1.7v1.6h-1.7zM169 562.4h1.7v1.6h-1.7zM193 562.4h1.7v1.6h-1.7zM205 562.4h1.7v1.6h-1.7zM217 562.4h1.7v1.6h-1.7zM229 562.4h1.7v1.6h-1.7zM253 562.4h1.7v1.6h-1.7zM265 562.4h1.7v1.6h-1.7zM277 562.4h1.7v1.6h-1.7zM289 562.4h1.7v1.6h-1.7zM313 562.4h1.7v1.6h-1.7zM325 562.4h1.7v1.6h-1.7zM337 562.4h1.7v1.6h-1.7zM349 562.4h1.7v1.6h-1.7zM373 562.4h1.7v1.6h-1.7zM385 562.4h1.7v1.6h-1.7zM397 562.4h1.7v1.6h-1.7zM409 562.4h1.7v1.6h-1.7zM433 562.4h1.7v1.6h-1.7zM445 562.4h1.7v1.6h-1.7zM457 562.4h1.7v1.6h-1.7zM469 562.4h1.7v1.6h-1.7zM493 562.4h1.7v1.6h-1.7zM505 562.4h1.7v1.6h-1.7zM517 562.4h1.7v1.6h-1.7zM529 562.4h1.7v1.6h-1.7zM553 562.4h1.7v1.6h-1.7zM565 562.4h1.7v1.6h-1.7zM577 562.4h1.7v1.6h-1.7zM589 562.4h1.7v1.6h-1.7zM613 562.4h1.7v1.6h-1.7zM625 562.4h1.7v1.6h-1.7zM637 562.4h1.7v1.6h-1.7zM649 562.4h1.7v1.6h-1.7zM673 562.4h1.7v1.6h-1.7zM685 562.4h1.7v1.6h-1.7zM697 562.4h1.7v1.6h-1.7zM709 562.4h1.7v1.6h-1.7zM733 562.4h1.7v1.6h-1.7zM745 562.4h1.7v1.6h-1.7zM757 562.4h1.7v1.6h-1.7zM769 562.4h1.7v1.6h-1.7zM793 562.4h1.7v1.6h-1.7zM805 562.4h1.7v1.6h-1.7zM817 562.4h1.7v1.6h-1.7zM829 562.4h1.7v1.6h-1.7zM853 562.4h1.7v1.6h-1.7zM865 562.4h1.7v1.6h-1.7zM877 562.4h1.7v1.6h-1.7zM889 562.4h1.7v1.6h-1.7zM913 562.4h1.7v1.6h-1.7zM925 562.4h1.7v1.6h-1.7z" fill="#929292"/><path d="M37.5 321.5h1.5v3h-1.5zM49.5 321.5h1.5v3h-1.5zM61.5 321.5h1.5v3h-1.5zM73.5 321.5h1.5v3h-1.5zM85.5 321.5h1.5v3h-1.5zM97.5 321.5h1.5v3h-1.5zM109.5 321.5h1.5v3h-1.5zM121.5 321.5h1.5v3h-1.5zM133.5 321.5h1.5v3h-1.5zM145.5 321.5h1.5v3h-1.5zM157.5 321.5h1.5v3h-1.5zM169.5 321.5h1.5v3h-1.5zM181.5 321.5h1.5v3h-1.5zM193.5 321.5h1.5v3h-1.5zM205.5 321.5h1.5v3h-1.5zM217.5 321.5h1.5v3h-1.5zM229.5 321.5h1.5v3h-1.5zM241.5 321.5h1.5v3h-1.5zM253.5 321.5h1.5v3h-1.5zM265.5 321.5h1.5v3h-1.5zM277.5 321.5h1.5v3h-1.5zM289.5 321.5h1.5v3h-1.5zM301.5 321.5h1.5v3h-1.5zM313.5 321.5h1.5v3h-1.5zM325.5 321.5h1.5v3h-1.5zM337.5 321.5h1.5v3h-1.5zM349.5 321.5h1.5v3h-1.5zM361.5 321.5h1.5v3h-1.5zM373.5 321.5h1.5v3h-1.5zM385.5 321.5h1.5v3h-1.5zM397.5 321.5h1.5v3h-1.5zM409.5 321.5h1.5v3h-1.5zM421.5 321.5h1.5v3h-1.5zM433.5 321.5h1.5v3h-1.5zM445.5 321.5h1.5v3h-1.5zM457.5 321.5h1.5v3h-1.5zM469.5 321.5h1.5v3h-1.5zM493.5 321.5h1.5v3h-1.5zM505.5 321.5h1.5v3h-1.5zM517.5 321.5h1.5v3h-1.5zM529.5 321.5h1.5v3h-1.5zM541.5 321.5h1.5v3h-1.5zM553.5 321.5h1.5v3h-1.5zM565.5 321.5h1.5v3h-1.5zM577.5 321.5h1.5v3h-1.5zM589.5 321.5h1.5v3h-1.5zM601.5 321.5h1.5v3h-1.5zM613.5 321.5h1.5v3h-1.5zM625.5 321.5h1.5v3h-1.5zM637.5 321.5h1.5v3h-1.5zM649.5 321.5h1.5v3h-1.5zM661.5 321.5h1.5v3h-1.5zM673.5 321.5h1.5v3h-1.5zM685.5 321.5h1.5v3h-1.5zM697.5 321.5h1.5v3h-1.5zM709.5 321.5h1.5v3h-1.5zM721.5 321.5h1.5v3h-1.5zM733.5 321.5h1.5v3h-1.5zM745.5 321.5h1.5v3h-1.5zM757.5 321.5h1.5v3h-1.5zM769.5 321.5h1.5v3h-1.5zM781.5 321.5h1.5v3h-1.5zM793.5 321.5h1.5v3h-1.5zM805.5 321.5h1.5v3h-1.5zM817.5 321.5h1.5v3h-1.5zM829.5 321.5h1.5v3h-1.5zM841.5 321.5h1.5v3h-1.5zM853.5 321.5h1.5v3h-1.5zM865.5 321.5h1.5v3h-1.5zM877.5 321.5h1.5v3h-1.5zM889.5 321.5h1.5v3h-1.5zM901.5 321.5h1.5v3h-1.5zM913.5 321.5h1.5v3h-1.5zM925.5 321.5h1.5v3h-1.5zM480 35h4v1.2h-4zM480 47h4v1.2h-4zM480 59h4v1.2h-4zM480 71h4v1.2h-4zM480 83h4v1.2h-4zM480 95h4v1.2h-4zM480 107h4v1.2h-4zM480 119h4v1.2h-4zM480 131h4v1.2h-4zM480 143h4v1.2h-4zM480 155h4v1.2h-4zM480 167h4v1.2h-4zM480 179h4v1.2h-4zM480 191h4v1.2h-4zM480 203h4v1.2h-4zM480 215h4v1.2h-4zM480 227h4v1.2h-4zM480 239h4v1.2h-4zM480 251h4v1.2h-4zM480 263h4v1.2h-4zM480 275h4v1.2h-4zM480 287h4v1.2h-4zM480 299h4v1.2h-4zM480 311h4v1.2h-4zM480 335h4v1.2h-4zM480 347h4v1.2h-4zM480 359h4v1.2h-4zM480 371h4v1.2h-4zM480 383h4v1.2h-4zM480 395h4v1.2h-4zM480 407h4v1.2h-4zM480 419h4v1.2h-4zM480 431h4v1.2h-4zM480 443h4v1.2h-4zM480 455h4v1.2h-4zM480 467h4v1.2h-4zM480 479h4v1.2h-4zM480 491h4v1.2h-4zM480 503h4v1.2h-4zM480 515h4v1.2h-4zM480 527h4v1.2h-4zM480 539h4v1.2h-4zM480 551h4v1.2h-4zM480 563h4v1.2h-4zM480 575h4v1.2h-4zM480 587h4v1.2h-4zM480 599h4v1.2h-4zM480 611h4v1.2h-4zM481 322h2v2h-2z" fill="#d0d0d0"/>
<path d="M25 25h1.2v3h-1.2zM25 618h1.2v3h-1.2zM37 25h1.2v3h-1.2zM37 618h1.2v3h-1.2zM49 25h1.2v3h-1.2zM49 618h1.2v3h-1.2zM61 25h1.2v6h-1.2zM61 615h1.2v6h-1.2zM73 25h1.2v3h-1.2zM73 618h1.2v3h-1.2zM85 25h1.2v3h-1.2zM85 618h1.2v3h-1.2zM97 25h1.2v3h-1.2zM97 618h1.2v3h-1.2zM109 25h1.2v3h-1.2zM109 618h1.2v3h-1.2zM121 25h1.2v6h-1.2zM121 615h1.2v6h-1.2zM133 25h1.2v3h-1.2zM133 618h1.2v3h-1.2zM145 25h1.2v3h-1.2zM145 618h1.2v3h-1.2zM157 25h1.2v3h-1.2zM157 618h1.2v3h-1.2zM169 25h1.2v3h-1.2zM169 618h1.2v3h-1.2zM181 25h1.2v6h-1.2zM181 615h1.2v6h-1.2zM193 25h1.2v3h-1.2zM193 618h1.2v3h-1.2zM205 25h1.2v3h-1.2zM205 618h1.2v3h-1.2zM217 25h1.2v3h-1.2zM217 618h1.2v3h-1.2zM229 25h1.2v3h-1.2zM229 618h1.2v3h-1.2zM241 25h1.2v6h-1.2zM241 615h1.2v6h-1.2zM253 25h1.2v3h-1.2zM253 618h1.2v3h-1.2zM265 25h1.2v3h-1.2zM265 618h1.2v3h-1.2zM277 25h1.2v3h-1.2zM277 618h1.2v3h-1.2zM289 25h1.2v3h-1.2zM289 618h1.2v3h-1.2zM301 25h1.2v6h-1.2zM301 615h1.2v6h-1.2zM313 25h1.2v3h-1.2zM313 618h1.2v3h-1.2zM325 25h1.2v3h-1.2zM325 618h1.2v3h-1.2zM337 25h1.2v3h-1.2zM337 618h1.2v3h-1.2zM349 25h1.2v3h-1.2zM349 618h1.2v3h-1.2zM361 25h1.2v6h-1.2zM361 615h1.2v6h-1.2zM373 25h1.2v3h-1.2zM373 618h1.2v3h-1.2zM385 25h1.2v3h-1.2zM385 618h1.2v3h-1.2zM397 25h1.2v3h-1.2zM397 618h1.2v3h-1.2zM409 25h1.2v3h-1.2zM409 618h1.2v3h-1.2zM421 25h1.2v6h-1.2zM421 615h1.2v6h-1.2zM433 25h1.2v3h-1.2zM433 618h1.2v3h-1.2zM445 25h1.2v3h-1.2zM445 618h1.2v3h-1.2zM457 25h1.2v3h-1.2zM457 618h1.2v3h-1.2zM469 25h1.2v3h-1.2zM469 618h1.2v3h-1.2zM481 25h1.2v6h-1.2zM481 615h1.2v6h-1.2zM493 25h1.2v3h-1.2zM493 618h1.2v3h-1.2zM505 25h1.2v3h-1.2zM505 618h1.2v3h-1.2zM517 25h1.2v3h-1.2zM517 618h1.2v3h-1.2zM529 25h1.2v3h-1.2zM529 618h1.2v3h-1.2zM541 25h1.2v6h-1.2zM541 615h1.2v6h-1.2zM553 25h1.2v3h-1.2zM553 618h1.2v3h-1.2zM565 25h1.2v3h-1.2zM565 618h1.2v3h-1.2zM577 25h1.2v3h-1.2zM577 618h1.2v3h-1.2zM589 25h1.2v3h-1.2zM589 618h1.2v3h-1.2zM601 25h1.2v6h-1.2zM601 615h1.2v6h-1.2zM613 25h1.2v3h-1.2zM613 618h1.2v3h-1.2zM625 25h1.2v3h-1.2zM625 618h1.2v3h-1.2zM637 25h1.2v3h-1.2zM637 618h1.2v3h-1.2zM649 25h1.2v3h-1.2zM649 618h1.2v3h-1.2zM661 25h1.2v6h-1.2zM661 615h1.2v6h-1.2zM673 25h1.2v3h-1.2zM673 618h1.2v3h-1.2zM685 25h1.2v3h-1.2zM685 618h1.2v3h-1.2zM697 25h1.2v3h-1.2zM697 618h1.2v3h-1.2zM709 25h1.2v3h-1.2zM709 618h1.2v3h-1.2zM721 25h1.2v6h-1.2zM721 615h1.2v6h-1.2zM733 25h1.2v3h-1.2zM733 618h1.2v3h-1.2zM745 25h1.2v3h-1.2zM745 618h1.2v3h-1.2zM757 25h1.2v3h-1.2zM757 618h1.2v3h-1.2zM769 25h1.2v3h-1.2zM769 618h1.2v3h-1.2zM781 25h1.2v6h-1.2zM781 615h1.2v6h-1.2zM793 25h1.2v3h-1.2zM793 618h1.2v3h-1.2zM805 25h1.2v3h-1.2zM805 618h1.2v3h-1.2zM817 25h1.2v3h-1.2zM817 618h1.2v3h-1.2zM829 25h1.2v3h-1.2zM829 618h1.2v3h-1.2zM841 25h1.2v6h-1.2zM841 615h1.2v6h-1.2zM853 25h1.2v3h-1.2zM853 618h1.2v3h-1.2zM865 25h1.2v3h-1.2zM865 618h1.2v3h-1.2zM877 25h1.2v3h-1.2zM877 618h1.2v3h-1.2zM889 25h1.2v3h-1.2zM889 618h1.2v3h-1.2zM901 25h1.2v6h-1.2zM901 615h1.2v6h-1.2zM913 25h1.2v3h-1.2zM913 618h1.2v3h-1.2zM925 25h1.2v3h-1.2zM925 618h1.2v3h-1.2zM26 35h4v1h-4zM930 35h4v1h-4zM26 47h4v1h-4zM930 47h4v1h-4zM26 59h4v1h-4zM930 59h4v1h-4zM26 71h4v1h-4zM930 71h4v1h-4zM26 83h7v1h-7zM927 83h7v1h-7zM26 95h4v1h-4zM930 95h4v1h-4zM26 107h4v1h-4zM930 107h4v1h-4zM26 119h4v1h-4zM930 119h4v1h-4zM26 131h4v1h-4zM930 131h4v1h-4zM26 143h7v1h-7zM927 143h7v1h-7zM26 155h4v1h-4zM930 155h4v1h-4zM26 167h4v1h-4zM930 167h4v1h-4zM26 179h4v1h-4zM930 179h4v1h-4zM26 191h4v1h-4zM930 191h4v1h-4zM26 203h7v1h-7zM927 203h7v1h-7zM26 215h4v1h-4zM930 215h4v1h-4zM26 227h4v1h-4zM930 227h4v1h-4zM26 239h4v1h-4zM930 239h4v1h-4zM26 251h4v1h-4zM930 251h4v1h-4zM26 263h7v1h-7zM927 263h7v1h-7zM26 275h4v1h-4zM930 275h4v1h-4zM26 287h4v1h-4zM930 287h4v1h-4zM26 299h4v1h-4zM930 299h4v1h-4zM26 311h4v1h-4zM930 311h4v1h-4zM26 323h7v1h-7zM927 323h7v1h-7zM26 335h4v1h-4zM930 335h4v1h-4zM26 347h4v1h-4zM930 347h4v1h-4zM26 359h4v1h-4zM930 359h4v1h-4zM26 371h4v1h-4zM930 371h4v1h-4zM26 383h7v1h-7zM927 383h7v1h-7zM26 395h4v1h-4zM930 395h4v1h-4zM26 407h4v1h-4zM930 407h4v1h-4zM26 419h4v1h-4zM930 419h4v1h-4zM26 431h4v1h-4zM930 431h4v1h-4zM26 443h7v1h-7zM927 443h7v1h-7zM26 455h4v1h-4zM930 455h4v1h-4zM26 467h4v1h-4zM930 467h4v1h-4zM26 479h4v1h-4zM930 479h4v1h-4zM26 491h4v1h-4zM930 491h4v1h-4zM26 503h7v1h-7zM927 503h7v1h-7zM26 515h4v1h-4zM930 515h4v1h-4zM26 527h4v1h-4zM930 527h4v1h-4zM26 539h4v1h-4zM930 539h4v1h-4zM26 551h4v1h-4zM930 551h4v1h-4zM26 563h7v1h-7zM927 563h7v1h-7zM26 575h4v1h-4zM930 575h4v1h-4zM26 587h4v1h-4zM930 587h4v1h-4zM26 599h4v1h-4zM930 599h4v1h-4zM26 611h4v1h-4zM930 611h4v1h-4z" fill="#e0e0e0"/>
<path d="M175 323h13v1h-13zM181 317h1v13h-1zM775 323h13v1h-13zM781 317h1v13h-1z" fill="#f0f0f0"/>
<path d="M246.8 25h1.6v596h-1.6zM370.8 25h1.6v596h-1.6z" fill="#5a0c5a"/>
<line x1="247.6" y1="32.4" x2="247.6" y2="621" stroke="#b048b0" stroke-width="1.3" stroke-dasharray="4 5.5"/>
<line x1="371.6" y1="32.4" x2="371.6" y2="621" stroke="#b048b0" stroke-width="1.3" stroke-dasharray="4 5.5"/>
<path d="M371 279h1.2v45h-1.2z" fill="#c87850"/><path d="M248 322.3H308V324.7H248zM248 320.5h1v2h-1zM249 323.5h1v3.5h-1zM256 320.5h1v2h-1zM261 323.5h1v3.5h-1zM262 323.5h1v3.5h-1zM264 323.5h1v2.5h-1zM265 323.5h1v3.5h-1zM266 323.5h1v2.5h-1zM277 323.5h1v3h-1zM278 323.5h1v2.5h-1zM280 320.5h1v2h-1zM295 323.5h1v3h-1zM300 320.5h1v2h-1zM302 323.5h1v3h-1zM305 323.5h1v2.5h-1zM307 323.5h1v3h-1zM317 322.3H372V324.7H317zM319 323.5h1v3.5h-1zM321 323.5h1v3.5h-1zM326 321.5h1v2h-1zM328 323.5h1v3.5h-1zM338 323.5h1v3h-1zM344 323.5h1v3.5h-1zM350 321.0h1v2h-1zM352 323.5h1v3h-1zM357 323.5h1v3.5h-1zM364 323.5h1v2.5h-1zM366 323.5h1v3h-1zM367 321.0h1v2h-1zM370 323.5h1v2.5h-1zM881 322.3H934V324.7H881zM886 323.5h1v3.5h-1zM888 323.5h1v3.5h-1zM889 321.0h1v2h-1zM890 321.5h1v2h-1zM893 323.5h1v3.5h-1zM899 323.5h1v3h-1zM901 320.5h1v2h-1zM903 321.5h1v2h-1zM904 323.5h1v2.5h-1zM911 323.5h1v3.5h-1zM913 323.5h1v3h-1zM920 323.5h1v3h-1zM921 323.5h1v2.5h-1zM929 323.5h1v3h-1zM307 305.8h2v18h-2zM316 307h2v17h-2zM307 305.8h6v4h-6zM312 306.5h6v3.5h-6zM879.8 180h1.4v66h-1.4zM880.6 246h1.4v78h-1.4zM437 178.2H880.5V185.3H437zM439 185h1v2.5h-1zM441 185h1v1.5h-1zM442 185h1v2.5h-1zM447 185h1v2h-1zM470 185h1v2.5h-1zM477 185h1v2h-1zM479 185h1v1.5h-1zM481 185h1v1.5h-1zM482 185h1v1.5h-1zM484 185h1v2.5h-1zM486 177.6h1v1.2h-1zM487 185h1v2h-1zM493 177.6h1v1.2h-1zM497 185h1v1.5h-1zM498 185h1v2h-1zM514 185h1v2h-1zM516 177.6h1v1.2h-1zM517 185h1v2h-1zM523 177.6h1v1.2h-1zM531 185h1v2.5h-1zM543 185h1v1.5h-1zM549 185h1v2.5h-1zM552 185h1v2.5h-1zM553 185h1v2.5h-1zM554 185h1v2h-1zM557 185h1v1.5h-1zM577 177.6h1v1.2h-1zM580 177.6h1v1.2h-1zM587 177.6h1v1.2h-1zM589 177.6h1v1.2h-1zM616 185h1v2.5h-1zM617 185h1v2h-1zM620 185h1v1.5h-1zM624 185h1v1.5h-1zM638 185h1v1.5h-1zM641 185h1v2h-1zM644 185h1v2h-1zM647 185h1v2.5h-1zM652 185h1v2h-1zM653 185h1v2h-1zM654 185h1v2.5h-1zM656 185h1v2.5h-1zM669 185h1v2h-1zM671 185h1v2h-1zM680 177.6h1v1.2h-1zM682 177.6h1v1.2h-1zM691 185h1v2.5h-1zM696 185h1v2h-1zM699 185h1v2.5h-1zM707 185h1v2h-1zM709 185h1v2h-1zM714 185h1v2.5h-1zM721 177.6h1v1.2h-1zM729 185h1v2h-1zM743 185h1v2.5h-1zM753 185h1v2h-1zM756 177.6h1v1.2h-1zM759 185h1v2h-1zM763 185h1v2h-1zM767 177.6h1v1.2h-1zM780 185h1v1.5h-1zM786 185h1v2h-1zM789 185h1v2h-1zM800 185h1v1.5h-1zM805 177.6h1v1.2h-1zM806 185h1v2.5h-1zM808 177.6h1v1.2h-1zM809 185h1v1.5h-1zM816 185h1v2.5h-1zM817 185h1v2h-1zM818 185h1v2h-1zM819 185h1v1.5h-1zM824 185h1v1.5h-1zM834 185h1v2h-1zM837 185h1v2.5h-1zM839 185h1v2.5h-1zM840 185h1v1.5h-1zM842 185h1v2.5h-1zM843 185h1v1.5h-1z" fill="#f0f010"/><path d="M373.12 279.86 L373.26 276.58 L374.82 274.14 L377.01 272.05 L378.49 269.56 L378.88 266.42 L381.09 264.35 L382.43 261.78 L383.35 258.96 L385.13 256.63 L386.79 254.24 L387.15 251.10 L389.30 248.99 L389.92 245.99 L391.88 243.77 L393.82 241.55 L394.90 238.82 L396.77 236.55 L396.79 233.20 L398.44 230.81 L400.64 228.73 L402.21 226.28 L402.80 223.27 L404.15 220.70 L405.73 218.26 L407.63 216.01 L408.18 212.97 L410.22 210.80 L412.01 208.48 L413.34 205.90 L413.63 202.71 L416.18 200.84 L416.37 197.59 L418.00 195.18 L419.27 192.57 L421.55 190.53 L422.47 187.71 L423.84 185.15 L425.79 182.93 L426.36 179.91 L428.53 177.81 L431 175.5 L434 175.5 L437 180" fill="none" stroke="#f0f010" stroke-width="2.8" stroke-linejoin="miter"/>
<path d="M0 313.6H17L23.6 323.7L17 334H0z" fill="#000" stroke="#c8e040" stroke-width="1.6"/>
</svg>
<div class="a" style="left:4px;top:315.5px;font-family:'Liberation Sans',sans-serif;font-size:17px;color:#d8d840">2</div>
<!-- measure box -->
<div class="a" style="left:30px;top:510px;width:226px;height:113px;background:#000;border:2px solid #78b0c8;border-radius:6px"></div>
<div class="t" style="left:40px;top:516px;color:#d6d6d6">△x:0.206s</div>
<div class="t" style="left:40px;top:543px;color:#d6d6d6">1/△x:4.854HZ</div>
<div class="t" style="left:40px;top:572px;color:#d6d6d6">x1:0.150s</div>
<div class="t" style="left:40px;top:598px;color:#d6d6d6">x2:-56.00ms</div>
<!-- bottom left panel -->
<div class="a" style="left:0;top:623px;width:383px;height:97px;background:#6ab8c8"></div>
<div class="a" style="left:1.5px;top:623.8px;width:248.8px;height:22.8px;background:#000;border-radius:5px"></div>
<div class="a" style="left:1.5px;top:648px;width:248.8px;height:23px;background:#000;border-radius:5px"></div>
<div class="a" style="left:253.3px;top:623.8px;width:126.7px;height:47.2px;background:#000;border-radius:6px"></div>
<div class="a" style="left:1.5px;top:673.6px;width:378.5px;height:43.6px;background:#000;border-radius:5px"></div>
<div class="circ" style="left:3px;top:627.5px;background:#f01010"></div><svg class="a" style="left:0;top:0" width="30" height="660"><path d="M10.6 630.6h3v10.2h-3zM8 633.6l3-3h1.5v2.4l-3.3 2.4z" fill="#100000"/></svg>
<div class="t" style="left:21.5px;top:629px;color:#d01818">5V-</div>
<div class="t" style="left:127px;top:629px;color:#d01818">0.00div</div>
<div class="circ" style="left:3px;top:650.5px;background:#e8e828">2</div>
<div class="t" style="left:21.5px;top:653px;color:#d8d830">2V-</div>
<div class="t" style="left:127px;top:653.3px;color:#d8d830">0.00div</div>
<div class="t" style="left:275.5px;top:628px;color:#d6d6d6">(5KS/s)</div>
<div class="t" style="left:262px;top:651px;color:#d6d6d6">Depth:10K</div>
<div class="circ" style="left:3px;top:674.5px;background:#e8e828">2</div>
<div class="t" style="left:24.5px;top:676.5px;color:#d8d830">F:  ?</div>
<div class="circ" style="left:3px;top:697px;background:#e8e828">2</div>
<div class="t" style="left:24.5px;top:698.5px;color:#d8d830">+D:47.4%</div>
<div class="circ" style="left:192.5px;top:674.3px;background:#e8e828">2</div>
<div class="t" style="left:216.8px;top:676.7px;color:#d8d830">Vk:2.677v</div>
<div class="circ" style="left:192.5px;top:697px;background:#e8e828">2</div>
<div class="t" style="left:216.8px;top:699.3px;color:#d8d830">V:1.566v</div>
<!-- bottom right -->
<div class="a" style="left:383px;top:646px;width:111px;height:70px;background:#0876d6"></div>
<div class="a" style="left:494px;top:646px;width:464px;height:70px;background:#0562a2"></div>
<div class="pill" style="left:383px;top:624px;width:119px;height:22px"></div>
<div class="t" style="left:399.2px;top:627.5px;color:#d6d6d6">M:100ms</div>
<div class="pill" style="left:797px;top:624px;width:155.5px;height:21.5px"></div>
<div class="circ" style="left:800.5px;top:625.3px;background:#f01010"></div><svg class="a" style="left:790px;top:0" width="40" height="660"><path d="M18.6 628.6h3v10.4h-3zM16 631.6l3-3h1.5v2.4l-3.3 2.4z" fill="#100000"/></svg>
<svg class="a" style="left:820px;top:624px" width="30" height="22"><path d="M2.5 18.5H12.5L17.5 2.8H25.5" fill="none" stroke="#d8d8d8" stroke-width="1.5"/></svg>
<div class="t" style="left:848px;top:628px;color:#d6d6d6">0.00mV</div>
<div class="a" style="left:387px;top:649px;width:107px;height:67px;background:#0a80e0;border-radius:4px;border-top:2px solid #48a8f0;border-left:2px solid #48a8f0;border-right:2.5px solid #0040a0;border-bottom:2.5px solid #0040a0"></div>
<div class="t" style="left:415px;top:660.5px;color:#0a2060;-webkit-text-stroke:0.4px #0a2060">Type</div>
<div class="a" style="left:409.4px;top:685.6px;width:60px;height:23.2px;background:#e8e8e8"></div>
<div class="t" style="left:410.5px;top:688.5px;color:#000">Image</div>
<div class="a" style="left:717px;top:649px;width:107px;height:67px;background:#0a80e0;border-radius:4px;border-top:2px solid #48a8f0;border-left:2px solid #48a8f0;border-right:2.5px solid #0040a0;border-bottom:2.5px solid #0040a0"></div>
<div class="t" style="left:745px;top:675px;color:#0a2060;-webkit-text-stroke:0.4px #0a2060">Save</div>
</body></html>
